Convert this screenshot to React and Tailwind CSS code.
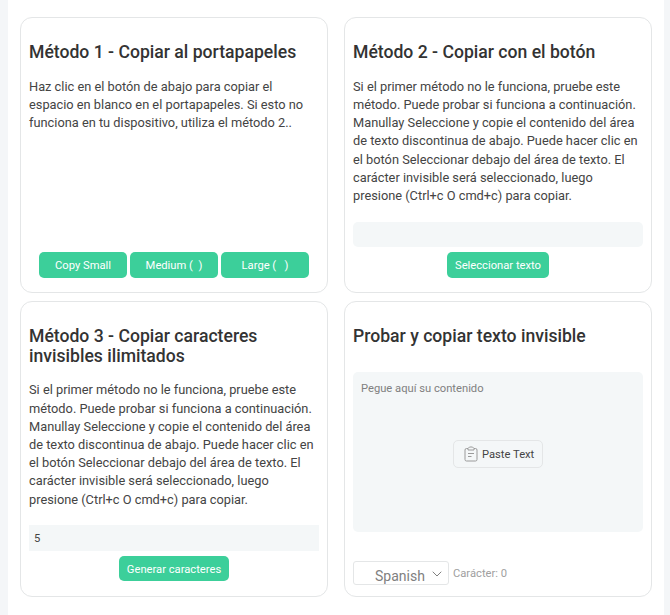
import React from "react"
import { ChevronDown } from "lucide-react"

const longText =
    "Si el primer método no le funciona, pruebe este método. Puede probar si funciona a continuación. Manullay Seleccione y copie el contenido del área de texto discontinua de abajo. Puede hacer clic en el botón Seleccionar debajo del área de texto. El carácter invisible será seleccionado, luego presione (Ctrl+c O cmd+c) para copiar."

const Card = ({ title, className = "pb-[14px]", children }) => (
    <div className={`flex flex-col h-full border border-[#e4e6e7] rounded-xl bg-white pt-6 px-2 ${className}`}>
        <h2 className="text-[17.6px] leading-[20px] font-medium text-[#333333]">{title}</h2>
        {children}
    </div>
)

const Body = ({ className = "mt-[15.7px]", children }) => (
    <p className={`${className} text-[12.8px] leading-[18.2px] text-[#444444]`}>{children}</p>
)

const GreenButton = ({ className = "", children }) => (
    <button className={`h-[26px] pt-[2px] rounded-[5px] bg-[#3ccf9a] text-white text-[11.2px] ${className}`}>
        {children}
    </button>
)

const App = () => {
    return (
        <div className="h-[615px] w-[670px] overflow-hidden bg-[#f4f6f8] font-['Roboto',sans-serif]">
            <div className="ml-2 w-[656px] h-full bg-white px-3 pt-[17px]">
                <div className="grid grid-cols-[308px_308px] grid-rows-[276px_296px] gap-x-4 gap-y-2">
                    {/* Metodo 1 */}
                    <Card title="Método 1 - Copiar al portapapeles">
                        <Body>
                            Haz clic en el botón de abajo para copiar el espacio en blanco en el portapapeles. Si esto no funciona en tu dispositivo, utiliza el método 2..
                        </Body>
                        <div className="mt-auto flex gap-[3px] pl-[10px]">
                            <GreenButton className="w-[88px]">Copy Small</GreenButton>
                            <GreenButton className="w-[88px]">Medium ( &nbsp;)</GreenButton>
                            <GreenButton className="w-[88px]">Large ( &nbsp; )</GreenButton>
                        </div>
                    </Card>

                    {/* Metodo 2 */}
                    <Card title="Método 2 - Copiar con el botón">
                        <Body>{longText}</Body>
                        <div className="mt-auto h-[25px] rounded-[5px] bg-[#f4f7f8]"></div>
                        <GreenButton className="mt-[5px] w-[102px] self-center">Seleccionar texto</GreenButton>
                    </Card>

                    {/* Metodo 3 */}
                    <Card title="Método 3 - Copiar caracteres invisibles ilimitados" className="pb-[15px]">
                        <Body className="mt-[15.3px]">{longText}</Body>
                        <input
                            readOnly
                            value="5"
                            className="mt-auto h-[26px] bg-[#f4f7f8] px-[5px] text-[11.2px] text-[#444444] outline-none"
                        />
                        <GreenButton className="mt-[5px] w-[110px] self-center !h-[25px] !pt-[3px]">Generar caracteres</GreenButton>
                    </Card>

                    {/* Probar */}
                    <Card title="Probar y copiar texto invisible" className="pb-[11px]">
                        <div className="relative mt-[26px] h-[160px]">
                            <textarea
                                placeholder="Pegue aquí su contenido"
                                className="block h-full w-full resize-none rounded-[5px] bg-[#f4f7f8] px-2 py-[10px] text-[11.2px] leading-[14px] outline-none placeholder:text-[#808080]"
                            ></textarea>
                            <button className="absolute left-[100px] top-[68px] flex h-[28px] w-[90px] items-center gap-[4px] rounded-[5px] border border-[#e4e6e7] pl-[10px] text-[11.2px] text-[#444444]">
                                <svg width="14" height="16" viewBox="0 0 14 16" fill="none" stroke="#9a9a9a" strokeWidth="1">
                                    <path d="M4 2.5H2.5a1.5 1.5 0 0 0-1.5 1.5v9.5A1.5 1.5 0 0 0 2.5 15h9a1.5 1.5 0 0 0 1.5-1.5V4a1.5 1.5 0 0 0-1.5-1.5H10" />
                                    <path d="M4 2.5 5.5 1h3L10 2.5V4H4z" />
                                    <path d="M4 7.5h6M4 10.5h3.5" />
                                </svg>
                                <span className="pt-[2px]">Paste Text</span>
                            </button>
                        </div>
                        <div className="mt-auto flex items-center gap-1">
                            <div className="relative h-[24px] w-[96px]">
                                <select className="h-full w-full appearance-none rounded-[3px] border border-[#e4e6e7] bg-white pl-[21px] pt-[4px] text-[14px] text-[#808080] outline-none">
                                    <option>Spanish</option>
                                </select>
                                <ChevronDown strokeWidth={1.5} className="absolute right-[4px] top-[5px] h-[16px] w-[16px] text-[#808080]" />
                            </div>
                            <span className="mt-[3px] text-[11.2px] text-[#a0a0a0]">Carácter: 0</span>
                        </div>
                    </Card>
                </div>
            </div>
        </div>
    )
}

export default App
